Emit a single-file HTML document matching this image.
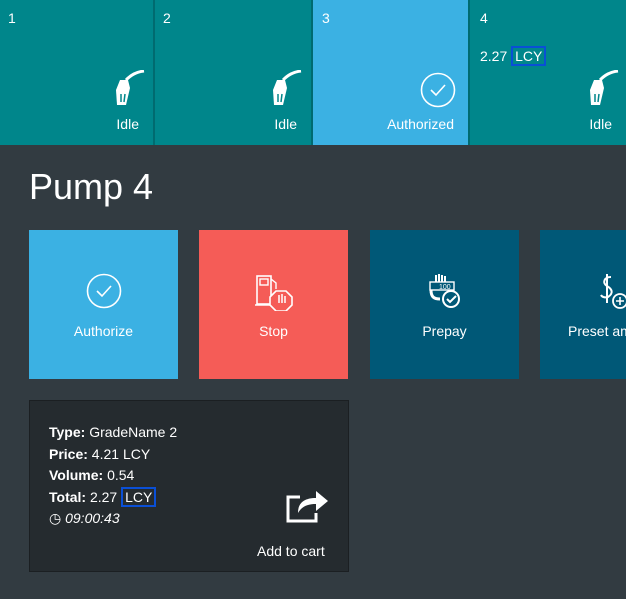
<!DOCTYPE html>
<html><head><meta charset="utf-8"><style>
*{margin:0;padding:0;box-sizing:border-box}
body{width:626px;height:599px;background:#323b41;font-family:"Liberation Sans","DejaVu Sans",sans-serif;color:#fff;position:relative;overflow:hidden}
.a{position:absolute}
.tile{position:absolute;top:0;height:145px;background:#00868b}
.num{position:absolute;left:8px;top:10px;font-size:14px}
.st{position:absolute;right:14px;top:116px;font-size:14px}
.btn{position:absolute;top:230px;width:149px;height:149px}
.btn .l{position:absolute;left:0;right:0;top:93px;text-align:center;font-size:14px}
.box{border:2px solid #0a4fd6;padding:0 2px}
.card p{font-size:14px;line-height:21.5px}
</style></head><body>
<div class="a" style="left:0;top:0;width:626px;height:145px;background:#006b70"></div>
<div class="tile" style="left:0;width:153px"><div class="num">1</div>
<svg class="a" style="left:112px;top:70px" width="34" height="36" viewBox="0 0 34 36"><path d="M32 1 C24 2 19 5 14 10" stroke="#fff" stroke-width="3" fill="none"/><path d="M8 10 L16 10 L18 18 L14 35 L5 35 L4 20 Z" fill="#fff"/><path d="M9 24 L9 32 M13 24 L12 32" stroke="#00868b" stroke-width="1.5"/></svg>
<div class="st">Idle</div></div>
<div class="tile" style="left:155px;width:156px"><div class="num">2</div>
<svg class="a" style="left:114px;top:70px" width="34" height="36" viewBox="0 0 34 36"><path d="M32 1 C24 2 19 5 14 10" stroke="#fff" stroke-width="3" fill="none"/><path d="M8 10 L16 10 L18 18 L14 35 L5 35 L4 20 Z" fill="#fff"/><path d="M9 24 L9 32 M13 24 L12 32" stroke="#00868b" stroke-width="1.5"/></svg>
<div class="st">Idle</div></div>
<div class="tile" style="left:313px;width:155px;background:#3bb1e3"><div class="num" style="left:9px">3</div>
<svg class="a" style="left:107px;top:72px" width="36" height="36" viewBox="0 0 36 36"><circle cx="18" cy="18" r="16.5" stroke="#fff" stroke-width="1.6" fill="none"/><path d="M11 18 L16 23 L25 13" stroke="#fff" stroke-width="1.6" fill="none"/></svg>
<div class="st" style="right:14px">Authorized</div></div>
<div class="tile" style="left:470px;width:156px"><div class="num" style="left:10px">4</div>
<div class="a" style="left:10px;top:46px;font-size:14px;line-height:20px">2.27 <span class="box">LCY</span></div>
<svg class="a" style="left:116px;top:70px" width="34" height="36" viewBox="0 0 34 36"><path d="M32 1 C24 2 19 5 14 10" stroke="#fff" stroke-width="3" fill="none"/><path d="M8 10 L16 10 L18 18 L14 35 L5 35 L4 20 Z" fill="#fff"/><path d="M9 24 L9 32 M13 24 L12 32" stroke="#00868b" stroke-width="1.5"/></svg>
<div class="st">Idle</div></div>

<div class="a" style="left:29px;top:164px;font-size:36px;line-height:46px">Pump 4</div>

<div class="btn" style="left:29px;background:#3bb1e3">
<svg class="a" style="left:57px;top:43px" width="36" height="36" viewBox="0 0 36 36"><circle cx="18" cy="18" r="16.5" stroke="#fff" stroke-width="1.6" fill="none"/><path d="M11 18 L16 23 L25 13" stroke="#fff" stroke-width="1.6" fill="none"/></svg>
<div class="l">Authorize</div></div>
<div class="btn" style="left:199px;background:#f55c57">
<svg class="a" style="left:55px;top:43px" width="40" height="38" viewBox="0 0 40 38"><rect x="3" y="3" width="14" height="28" fill="none" stroke="#fff" stroke-width="1.6"/><rect x="6" y="6" width="8" height="6" fill="none" stroke="#fff" stroke-width="1.4"/><path d="M1 32 H20" stroke="#fff" stroke-width="1.6"/><polygon points="22,18 32,18 38,24 38,32 32,38 22,38 16,32 16,24" fill="#f55c57" stroke="#fff" stroke-width="1.6"/><path d="M25 30 V22 M28 30 V21 M31 30 V23" stroke="#fff" stroke-width="1.5"/><path d="M17 6 L22 10 V16" stroke="#fff" stroke-width="1.4" fill="none"/></svg>
<div class="l">Stop</div></div>
<div class="btn" style="left:370px;background:#005877">
<svg class="a" style="left:56px;top:43px" width="38" height="38" viewBox="0 0 38 38"><path d="M10 2 V9 M13 1 V9 M16 2 V9 M19 3 V9" stroke="#fff" stroke-width="2"/><rect x="4" y="9" width="24" height="8" fill="none" stroke="#fff" stroke-width="1.4"/><text x="13" y="16" font-size="7" fill="#fff" font-family="Liberation Sans">100</text><path d="M5 17 C5 24 8 26 14 26" stroke="#fff" stroke-width="3" fill="none"/><circle cx="25" cy="26" r="8" fill="#005877" stroke="#fff" stroke-width="2"/><path d="M21 26 L24 29 L30 23" stroke="#fff" stroke-width="2" fill="none"/></svg>
<div class="l">Prepay</div></div>
<div class="btn" style="left:540px;background:#005877">
<svg class="a" style="left:58px;top:43px" width="34" height="38" viewBox="0 0 34 38"><path d="M13 4 C6 4 4 10 9 13 C14 16 16 20 10 24 C7 25 4 24 3 22" stroke="#fff" stroke-width="2" fill="none"/><path d="M9 1 V30" stroke="#fff" stroke-width="2"/><circle cx="22" cy="28" r="7" fill="#005877" stroke="#fff" stroke-width="1.8"/><path d="M22 24 V32 M18 28 H26" stroke="#fff" stroke-width="1.6"/></svg>
<div class="l" style="left:28px;text-align:left;white-space:nowrap">Preset am</div></div>

<div class="a card" style="left:29px;top:400px;width:320px;height:172px;background:#252b2f;border:1px solid #1b1f22">
<div class="a" style="left:19px;top:21px">
<p><b>Type:</b> GradeName 2</p>
<p><b>Price:</b> 4.21 LCY</p>
<p><b>Volume:</b> 0.54</p>
<p><b>Total:</b> 2.27 <span class="box">LCY</span></p>
<p><i>&#9719;</i> <i>09:00:43</i></p>
</div>
<svg class="a" style="left:256px;top:86px" width="44" height="36" viewBox="0 0 44 36"><path d="M14 10 H2 V34 H30 V26" stroke="#fff" stroke-width="3" fill="none"/><path d="M12 26 C12 16 18 11 30 11 V4 L42 14 L30 24 V17 C22 17 16 19 12 26 Z" fill="#fff"/></svg>
<div class="a" style="left:227px;top:142px;font-size:14px">Add to cart</div>
</div>
</body></html>
